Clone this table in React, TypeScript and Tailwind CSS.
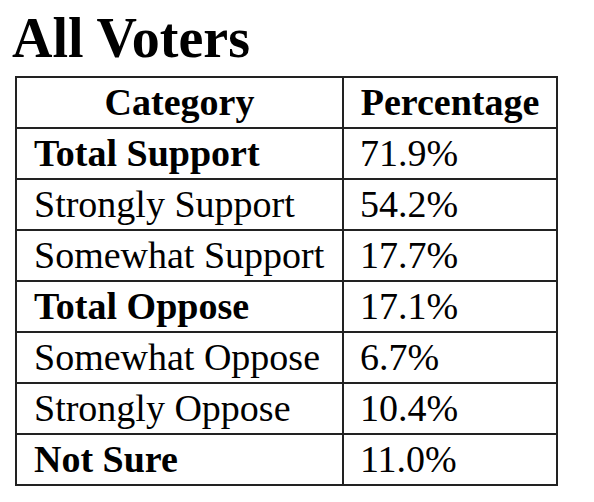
import React from "react";

const rows: { label: string; value: string; bold?: boolean }[] = [
  { label: "Total Support", value: "71.9%", bold: true },
  { label: "Strongly Support", value: "54.2%" },
  { label: "Somewhat Support", value: "17.7%" },
  { label: "Total Oppose", value: "17.1%", bold: true },
  { label: "Somewhat Oppose", value: "6.7%" },
  { label: "Strongly Oppose", value: "10.4%" },
  { label: "Not Sure", value: "11.0%", bold: true },
];

export default function App() {
  return (
    <div
      className="w-[594px] h-[502px] bg-white text-black"
      style={{ fontFamily: '"Liberation Serif", "Times New Roman", serif' }}
    >
      <div className="pt-[11px] pl-[12px] text-[56px] leading-[54px] font-bold">All Voters</div>
      <div className="mt-[11px] ml-[15px] w-[543px] border-2 border-[#222] text-[38px] leading-[49px]">
        <div className="flex border-b-2 border-[#222]">
          <div className="w-[325px] h-[49px] text-center font-bold">Category</div>
          <div className="w-[214px] h-[49px] border-l-2 border-[#222] text-center font-bold">Percentage</div>
        </div>
        {rows.map((r, i) => (
          <div
            key={r.label}
            className={i < rows.length - 1 ? "flex border-b-2 border-[#222]" : "flex"}
          >
            <div className={r.bold ? "w-[325px] h-[49px] pl-[17px] font-bold whitespace-nowrap" : "w-[325px] h-[49px] pl-[17px] whitespace-nowrap"}>
              {r.label}
            </div>
            <div className="w-[214px] h-[49px] border-l-2 border-[#222] pl-[16px]">{r.value}</div>
          </div>
        ))}
      </div>
    </div>
  );
}
